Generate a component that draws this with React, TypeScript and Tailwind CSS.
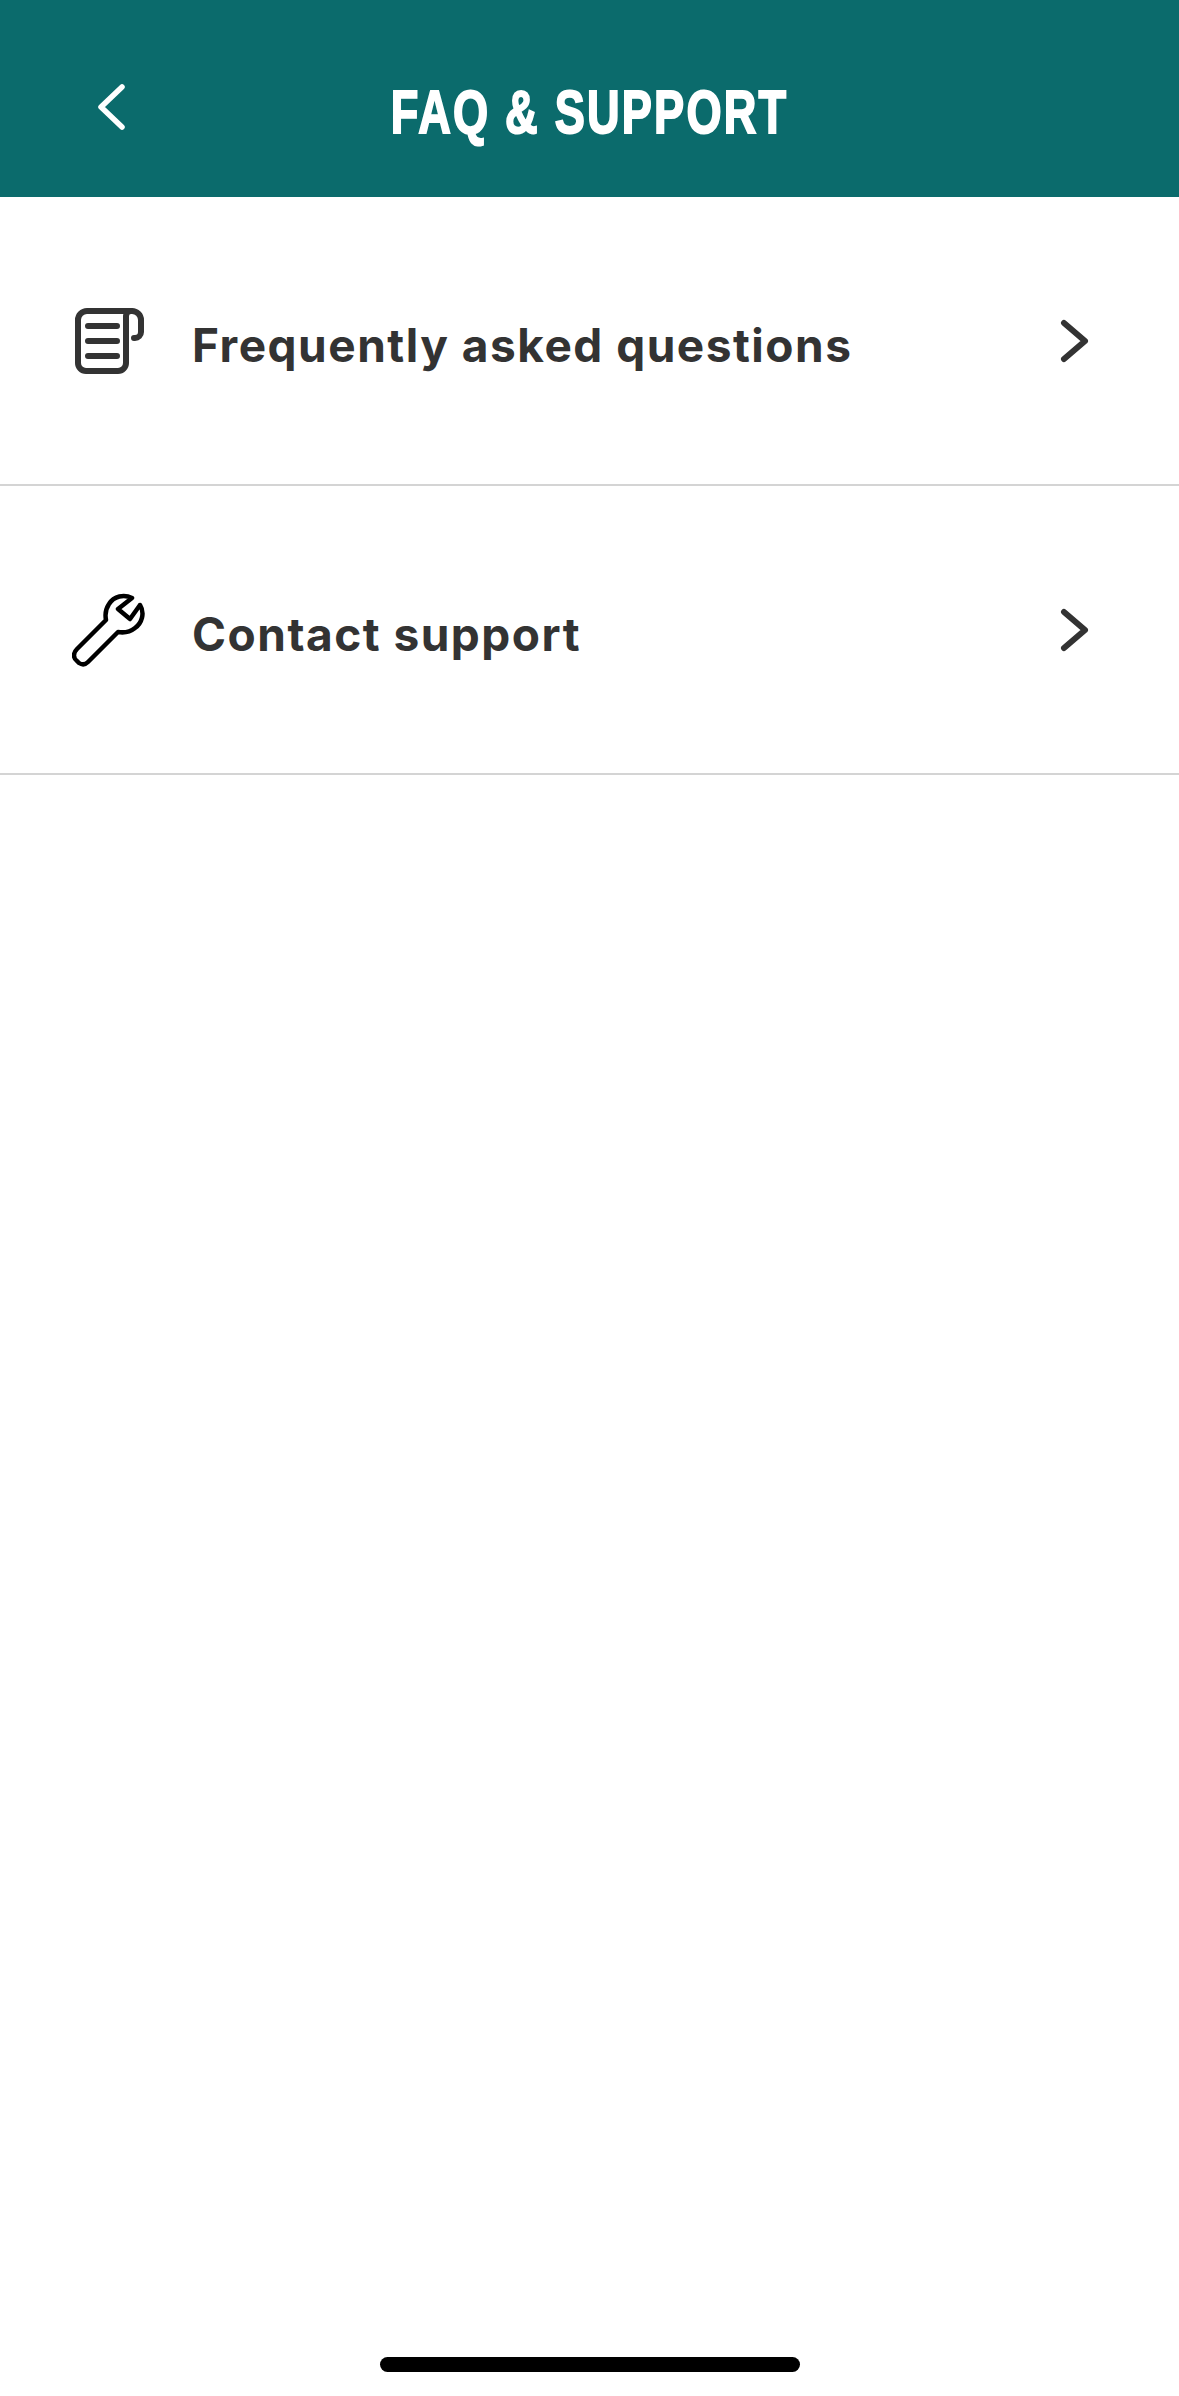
const rows = [
  { label: 'Frequently asked questions', icon: <FaqIcon /> },
  { label: 'Contact support', icon: <WrenchIcon /> },
];

function FaqIcon() {
  return (
    <svg className="ml-[5px] mt-[2px]" width="70" height="67" viewBox="0 0 70 67" fill="none" stroke="#333333" strokeWidth="6" strokeLinecap="round" strokeLinejoin="round">
      <path d="M3 12V55a8 8 0 0 0 8 8H43a8 8 0 0 0 8-8V8a5 5 0 0 1 5-5" />
      <path d="M3 12a9 9 0 0 1 9-9H57a9 9 0 0 1 9 9V24a6 6 0 0 1-6 6h-1" />
      <path d="M13 18h29M13 33h29M13 48h29" />
    </svg>
  );
}

function WrenchIcon() {
  return (
    <svg className="ml-[2px]" width="74" height="74" viewBox="0 0 74 74" fill="none" stroke="#000000" strokeWidth="4.5" strokeLinecap="round" strokeLinejoin="round">
      <path d="M60 5C52 1 42 3 37 11C33 17 33 22 34 27L5 56C1 60 1 65 5 68L7 70C10 72 13 72 16 69L46 39C52 40 58 39 63 35C70 30 73 20 68 12L58 26L46 16Z" />
    </svg>
  );
}

function Chevron() {
  return (
    <svg className="mt-[1px]" width="30" height="46" viewBox="0 0 30 46" fill="none" stroke="#333333" strokeWidth="6" strokeLinecap="round" strokeLinejoin="round">
      <path d="M5 5l21 18L5 41" />
    </svg>
  );
}

export default function App() {
  return (
    <div className="relative flex h-[2396px] w-[1179px] flex-col bg-white">
      <header className="relative flex h-[197px] items-center justify-center bg-[#0b6b6c] pt-[28px]">
        <button className="absolute left-[96px] top-[82px]">
          <svg width="32" height="50" viewBox="0 0 32 50" fill="none" stroke="#ffffff" strokeWidth="5.5" strokeLinecap="round" strokeLinejoin="round">
            <path d="M26 5L5 25l21 20" />
          </svg>
        </button>
        <h1 className="scale-x-[0.74] whitespace-nowrap font-['Liberation_Sans',sans-serif] text-[61px] font-bold leading-none tracking-[3px] text-white [-webkit-text-stroke:2px_white]">
          FAQ &amp; SUPPORT
        </h1>
      </header>

      {rows.map((row) => (
        <div key={row.label} className="flex h-[289px] items-center border-b-2 border-[#d4d4d4] pl-[70px] pr-[90px]">
          <div className="flex w-[122px] shrink-0">{row.icon}</div>
          <span className="flex-1 pt-[9px] font-['Inter',sans-serif] text-[46px] font-bold tracking-[1.5px] text-[#333333]">{row.label}</span>
          <Chevron />
        </div>
      ))}

      <div className="absolute bottom-[24px] left-[380px] h-[15px] w-[420px] rounded-full bg-black" />
    </div>
  );
}
